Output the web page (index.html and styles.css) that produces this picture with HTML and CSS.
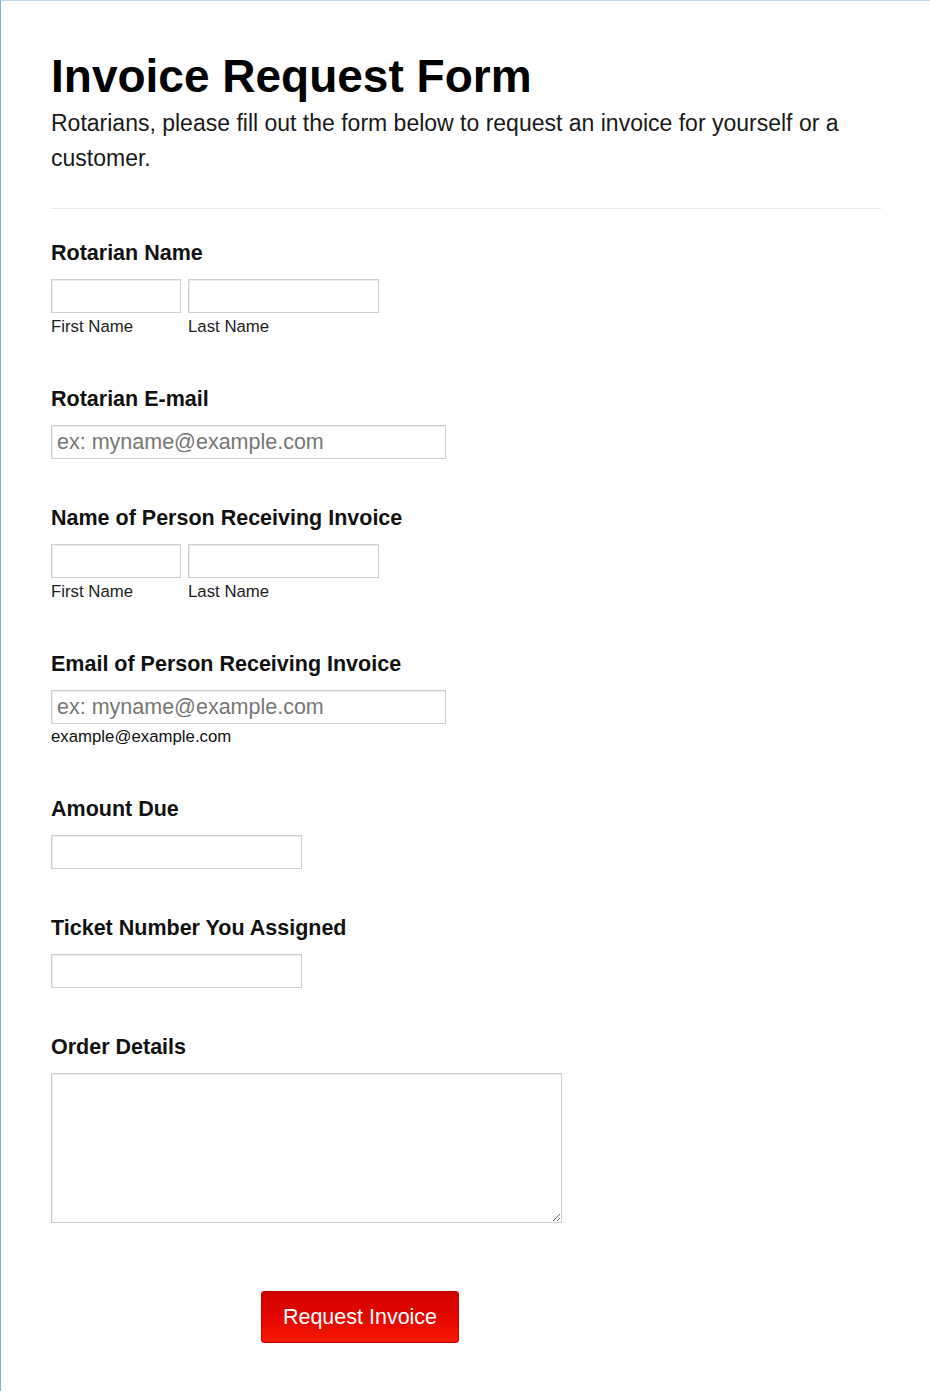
FILE: index.html
```html
<!DOCTYPE html>
<html lang="en">
<head>
<meta charset="utf-8">
<title>Invoice Request Form</title>
<link rel="stylesheet" href="styles.css">
</head>
<body>
<div class="page">
  <form class="form">
    <header class="head">
      <h1 class="title">Invoice Request Form</h1>
      <p class="desc">Rotarians, please fill out the form below to request an invoice for yourself or a customer.</p>
    </header>

    <div class="field">
      <label class="label">Rotarian Name</label>
      <div class="name-row">
        <div class="name-col">
          <input class="input input-first" type="text">
          <span class="sub">First Name</span>
        </div>
        <div class="name-col">
          <input class="input input-last" type="text">
          <span class="sub">Last Name</span>
        </div>
      </div>
    </div>

    <div class="field">
      <label class="label">Rotarian E-mail</label>
      <input class="input input-email" type="email" placeholder="ex: myname@example.com">
    </div>

    <div class="field">
      <label class="label">Name of Person Receiving Invoice</label>
      <div class="name-row">
        <div class="name-col">
          <input class="input input-first" type="text">
          <span class="sub">First Name</span>
        </div>
        <div class="name-col">
          <input class="input input-last" type="text">
          <span class="sub">Last Name</span>
        </div>
      </div>
    </div>

    <div class="field">
      <label class="label">Email of Person Receiving Invoice</label>
      <input class="input input-email" type="email" placeholder="ex: myname@example.com">
      <span class="sub sub-help">example@example.com</span>
    </div>

    <div class="field">
      <label class="label">Amount Due</label>
      <input class="input input-mid" type="text">
    </div>

    <div class="field">
      <label class="label">Ticket Number You Assigned</label>
      <input class="input input-mid" type="text">
    </div>

    <div class="field">
      <label class="label">Order Details</label>
      <textarea class="input textarea"></textarea>
    </div>

    <div class="actions">
      <button class="btn" type="button">Request Invoice</button>
    </div>
  </form>
</div>
</body>
</html>
```

FILE: styles.css
```css
html, body {
  margin: 0;
  padding: 0;
  background: #ffffff;
}

body {
  font-family: "Liberation Sans", Arial, sans-serif;
  color: #000;
}

.page {
  min-height: 1391px;
  box-sizing: border-box;
  border-top: 1px solid #bcd6ee;
  border-left: 1px solid #7fb1da;
  padding: 0 49px 0 50px;
}

.form {
  display: flex;
  flex-direction: column;
}

.head {
  padding-top: 49px;
  padding-bottom: 32px;
  border-bottom: 1px solid #e6e6e6;
  margin-bottom: 32px;
}

.title {
  margin: 0;
  font-size: 46px;
  font-weight: bold;
  line-height: 53px;
  color: #000;
}

.desc {
  margin: 3px 0 0;
  font-size: 23px;
  line-height: 35px;
  color: #1a1a1a;
}

.field {
  display: flex;
  flex-direction: column;
  align-items: flex-start;
  margin-bottom: 47px;
}

.label {
  font-size: 21.5px;
  font-weight: bold;
  line-height: 24px;
  margin-bottom: 14px;
  color: #111;
}

.name-row {
  display: flex;
  gap: 7px;
}

.name-col {
  display: flex;
  flex-direction: column;
}

.input {
  box-sizing: border-box;
  height: 34px;
  margin: 0;
  border: 1px solid #cfcfcf;
  box-shadow: inset 1px 1px 0 #ececec;
  background: #fff;
  font-family: "Liberation Sans", Arial, sans-serif;
  font-size: 21.5px;
  padding: 0 5px;
  color: #333;
  border-radius: 0;
  outline: none;
}

.input::placeholder {
  color: #777;
}

.input-first { width: 130px; }
.input-last { width: 191px; }
.input-email { width: 395px; }
.input-mid { width: 251px; }

.textarea {
  width: 511px;
  height: 150px;
  resize: both;
  display: block;
}

.sub {
  font-size: 16.8px;
  line-height: 23px;
  margin-top: 2px;
  padding-bottom: 2px;
  color: #222;
}

.sub-help {
  color: #111;
  line-height: 22px;
}

.actions {
  display: flex;
  padding-left: 210px;
  margin-top: 21px;
}

.btn {
  width: 198px;
  height: 52px;
  box-sizing: border-box;
  border: 1px solid #c10000;
  border-radius: 3px;
  background: linear-gradient(to bottom, #d00000 0%, #e60800 55%, #f51a00 100%);
  color: #fff;
  font-family: "Liberation Sans", Arial, sans-serif;
  font-size: 21.5px;
  cursor: pointer;
  padding: 0;
}
```
